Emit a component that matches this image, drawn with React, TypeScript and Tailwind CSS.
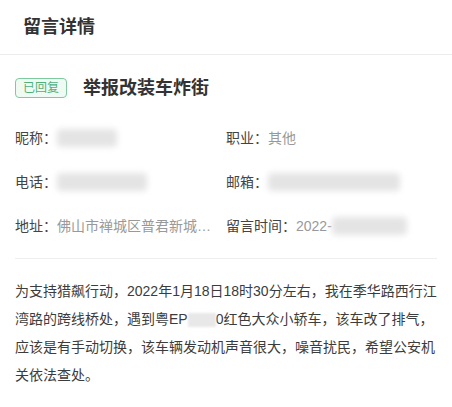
const font = { fontFamily: '"Liberation Sans", "Noto Sans CJK SC", sans-serif' };

const Blur = ({ w }: { w: string }) => (
  <span className={`inline-block h-[18px] ${w} rounded-sm bg-[#e4e4e4] blur-[3px] align-middle`} />
);

export default function App() {
  return (
    <div className="w-[452px] h-[407px] bg-white overflow-hidden" style={font}>
      <div className="h-[55px] flex items-center px-[23px] border-b border-[#ececec]">
        <span className="text-[18px] leading-[24px] font-bold text-[#333]">留言详情</span>
      </div>

      <div className="h-[20px] flex items-center px-[15px] mt-[23px] leading-[20px]">
        <span className="h-[20px] flex items-center px-[7px] rounded-[4px] border border-[#7fcaa0] bg-[#effaf3] text-[12px] text-[#4fb07c]">
          已回复
        </span>
        <span className="ml-[16px] text-[18px] font-bold text-[#333]">举报改装车炸街</span>
      </div>

      <div className="grid grid-cols-2 px-[15px] mt-[18px] text-[14px] leading-[20px]">
        <div className="h-[44px] flex items-center">
          <span className="text-[#444]">昵称：</span>
          <Blur w="w-[60px]" />
        </div>
        <div className="h-[44px] flex items-center">
          <span className="text-[#444]">职业：</span>
          <span className="text-[#999]">其他</span>
        </div>
        <div className="h-[44px] flex items-center">
          <span className="text-[#444]">电话：</span>
          <Blur w="w-[90px]" />
        </div>
        <div className="h-[44px] flex items-center">
          <span className="text-[#444]">邮箱：</span>
          <Blur w="w-[132px]" />
        </div>
        <div className="h-[44px] flex items-center min-w-0">
          <span className="text-[#444] shrink-0">地址：</span>
          <span className="text-[#999] truncate pr-[6px]">佛山市禅城区普君新城北路</span>
        </div>
        <div className="h-[44px] flex items-center">
          <span className="text-[#444]">留言时间：</span>
          <span className="text-[#999]">2022-</span>
          <Blur w="w-[75px]" />
        </div>
      </div>

      <div className="mx-[15px] mt-[10px] border-t border-[#eeeeee]" />

      <div className="px-[15px] mt-[18px] text-[14px] leading-[28px] text-[#3c3c3c] whitespace-nowrap">
        <div>为支持猎飙行动，2022年1月18日18时30分左右，我在季华路西行江</div>
        <div>
          湾路的跨线桥处，遇到粤EP
          <span className="inline-block w-[28px] h-[14px] bg-[#e8e8e8] blur-[1px] align-middle" />
          0红色大众小轿车，该车改了排气，
        </div>
        <div>应该是有手动切换，该车辆发动机声音很大，噪音扰民，希望公安机</div>
        <div>关依法查处。</div>
      </div>
    </div>
  );
}
